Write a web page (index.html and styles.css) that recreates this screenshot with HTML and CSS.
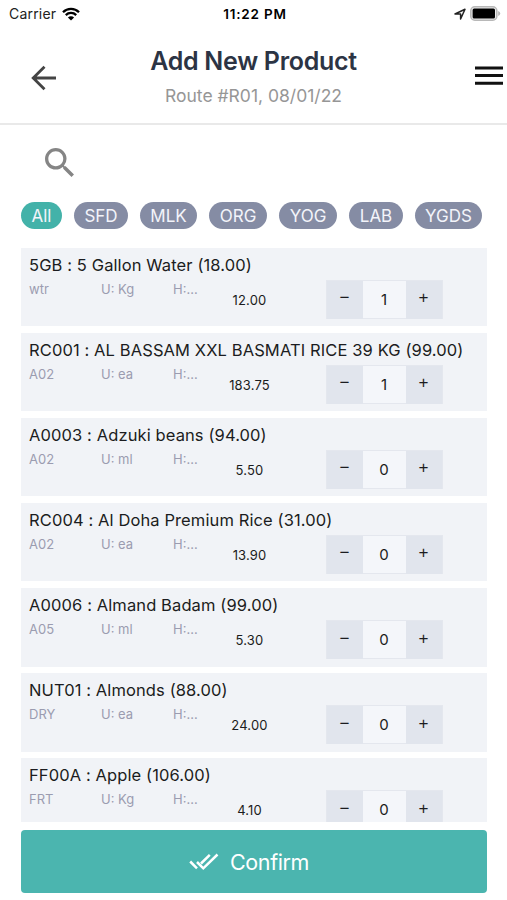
FILE: index.html
```html
<!DOCTYPE html>
<html lang="en">
<head>
    <meta charset="UTF-8">
    <meta name="viewport" content="width=device-width, initial-scale=1.0">
    <title>Add New Product</title>
    <link rel="stylesheet" href="styles.css">
</head>
<body>
    <div class="status-bar">
        <div class="status-left">
            <span>Carrier</span>
            <svg class="wifi" viewBox="0 0 18 14" width="18" height="14">
                <path d="M1 5.2a11.3 11.3 0 0 1 16 0M3.8 8.1a7.4 7.4 0 0 1 10.4 0" fill="none" stroke="#000" stroke-width="2.3"/>
                <path d="M9 13.6L5.9 10.5a4.4 4.4 0 0 1 6.2 0z"/>
            </svg>
        </div>
        <div class="status-time">11:22 PM</div>
        <div class="status-right">
            <svg viewBox="0 0 12 12" width="12" height="12">
                <path d="M1 6L11 1.2L6.6 11V6z" fill="none" stroke="#222" stroke-width="1.5" stroke-linejoin="round"/>
            </svg>
            <svg viewBox="0 0 31 15" width="31" height="15">
                <rect x="0.8" y="0.8" width="26" height="13.4" rx="4" fill="#eee" stroke="#b8b8b8" stroke-width="1.6"/>
                <rect x="2.6" y="2.6" width="22.4" height="9.8" rx="1.5"/>
                <path d="M28.2 5v5q2-.8 2-2.5t-2-2.5z" fill="#b4b4b4"/>
            </svg>
        </div>
    </div>

    <header class="header">
        <button class="icon-button">
            <svg viewBox="0 0 26 26" width="26" height="26">
                <path d="M25 13H2.5M13.5 1.7L2.2 13L13.5 24.3" fill="none" stroke="#444" stroke-width="2.8"/>
            </svg>
        </button>
        <div class="heading">
            <h1>Add New Product</h1>
            <p>Route #R01, 08/01/22</p>
        </div>
        <button class="icon-button menu">
            <svg viewBox="0 0 28 20" width="28" height="20">
                <path d="M0 2.1h28M0 9.6h28M0 17.3h28" stroke="#111" stroke-width="3"/>
            </svg>
        </button>
    </header>

    <div class="search">
        <svg viewBox="3 3 17.5 17.5" width="29" height="29">
            <path fill="#858585" d="M15.5 14h-.79l-.28-.27A6.47 6.47 0 0 0 16 9.5 6.5 6.5 0 1 0 9.5 16c1.61 0 3.09-.59 4.23-1.57l.27.28v.79l5 4.99L20.49 19l-4.99-5zm-6 0C7.01 14 5 11.99 5 9.5S7.01 5 9.5 5 14 7.01 14 9.5 11.99 14 9.5 14z"/>
        </svg>
    </div>

    <nav class="filters">
        <span class="chip w-all active">All</span>
        <span class="chip w-sfd">SFD</span>
        <span class="chip w-mlk">MLK</span>
        <span class="chip w-org">ORG</span>
        <span class="chip w-yog">YOG</span>
        <span class="chip w-lab">LAB</span>
        <span class="chip w-ygds">YGDS</span>
    </nav>

    <main class="list">
        <div class="card">
            <h2>5GB : 5 Gallon Water (18.00)</h2>
            <div class="details">
                <span class="meta">wtr</span><span class="meta">U: Kg</span><span class="meta">H:...</span>
                <span class="price">12.00</span>
                <div class="stepper"><button>−</button><span>1</span><button>+</button></div>
            </div>
        </div>
        <div class="card">
            <h2>RC001 : AL BASSAM XXL BASMATI RICE 39 KG (99.00)</h2>
            <div class="details">
                <span class="meta">A02</span><span class="meta">U: ea</span><span class="meta">H:...</span>
                <span class="price">183.75</span>
                <div class="stepper"><button>−</button><span>1</span><button>+</button></div>
            </div>
        </div>
        <div class="card">
            <h2>A0003 : Adzuki beans (94.00)</h2>
            <div class="details">
                <span class="meta">A02</span><span class="meta">U: ml</span><span class="meta">H:...</span>
                <span class="price">5.50</span>
                <div class="stepper"><button>−</button><span>0</span><button>+</button></div>
            </div>
        </div>
        <div class="card">
            <h2>RC004 : Al Doha Premium Rice (31.00)</h2>
            <div class="details">
                <span class="meta">A02</span><span class="meta">U: ea</span><span class="meta">H:...</span>
                <span class="price">13.90</span>
                <div class="stepper"><button>−</button><span>0</span><button>+</button></div>
            </div>
        </div>
        <div class="card">
            <h2>A0006 : Almand Badam (99.00)</h2>
            <div class="details">
                <span class="meta">A05</span><span class="meta">U: ml</span><span class="meta">H:...</span>
                <span class="price">5.30</span>
                <div class="stepper"><button>−</button><span>0</span><button>+</button></div>
            </div>
        </div>
        <div class="card">
            <h2>NUT01 : Almonds (88.00)</h2>
            <div class="details">
                <span class="meta">DRY</span><span class="meta">U: ea</span><span class="meta">H:...</span>
                <span class="price">24.00</span>
                <div class="stepper"><button>−</button><span>0</span><button>+</button></div>
            </div>
        </div>
        <div class="card">
            <h2>FF00A : Apple (106.00)</h2>
            <div class="details">
                <span class="meta">FRT</span><span class="meta">U: Kg</span><span class="meta">H:...</span>
                <span class="price">4.10</span>
                <div class="stepper"><button>−</button><span>0</span><button>+</button></div>
            </div>
        </div>
    </main>

    <button class="confirm">
        <svg viewBox="0 0 30 18" width="30" height="18">
            <path d="M1.2 8.5L8 15.3M8 9L14.3 15.3L28.5 1.5M12 10.5L20.8 1.8" fill="none" stroke="#fff" stroke-width="2.5"/>
        </svg>
        <span>Confirm</span>
    </button>
</body>
</html>
```

FILE: styles.css
```css
* {
    box-sizing: border-box;
}
body {
    margin: 0;
    width: 507px;
    height: 900px;
    overflow: hidden;
    display: flex;
    flex-direction: column;
    background-color: #fff;
    font-family: Inter, "Liberation Sans", sans-serif;
    color: #1b1c20;
}
button {
    border: 0;
    padding: 0;
    background: none;
    font-family: inherit;
    color: inherit;
}
svg {
    display: block;
}
h1, h2, p {
    margin: 0;
}

/* status bar */
.status-bar {
    height: 27px;
    padding: 0 6px 0 9px;
    display: grid;
    grid-template-columns: 1fr auto 1fr;
    align-items: center;
    font-size: 14px;
    letter-spacing: 0.2px;
    color: #222;
}
.status-left, .status-right {
    display: flex;
    align-items: center;
    gap: 6px;
}
.status-right {
    justify-content: flex-end;
    gap: 4px;
}
.status-time {
    font-weight: 600;
    font-size: 13.5px;
    letter-spacing: 0.8px;
    color: #000;
}

/* header */
.header {
    height: 98px;
    padding: 2px 4px 0 31px;
    display: grid;
    grid-template-columns: 26px 393px 28px;
    align-items: center;
    justify-content: space-between;
    border-bottom: 2px solid #e9e9e9;
}
.icon-button {
    padding-top: 3px;
}
.menu {
    padding-top: 0;
}
.heading {
    text-align: center;
    margin-right: 25px;
}
.heading h1 {
    font-size: 25px;
    line-height: 34px;
    font-weight: 600;
    letter-spacing: -0.3px;
    color: #2c3444;
}
.heading p {
    font-size: 17.5px;
    line-height: 24px;
    margin-top: 6px;
    color: #969696;
}

.search {
    height: 77px;
    padding: 23px 0 0 45px;
}

/* category chips */
.filters {
    height: 45px;
    padding-left: 21px;
    display: flex;
    gap: 12px;
}
.chip {
    height: 27px;
    line-height: 28px;
    border-radius: 14px;
    text-align: center;
    font-size: 17px;
    color: #f3f4fa;
    background-color: #858ca4;
}
.active {
    background-color: #43b2a9;
}
.w-all { width: 41px; }
.w-sfd { width: 54px; }
.w-mlk { width: 57px; }
.w-org { width: 58px; }
.w-yog { width: 58px; }
.w-lab { width: 54px; }
.w-ygds { width: 67px; }

/* product list */
.list {
    height: 575px;
    margin: 0 20px 0 21px;
    padding-top: 0.5px;
    overflow: hidden;
}
.card {
    height: 78.5px;
    margin-bottom: 6.65px;
    padding: 5px 0 0 8px;
    background-color: #f1f3f7;
}
.card h2 {
    font-size: 16.5px;
    line-height: 25px;
    font-weight: 400;
    letter-spacing: 0.11px;
    white-space: nowrap;
}
.details {
    display: flex;
    align-items: flex-start;
    padding-top: 2px;
}
.meta {
    width: 72px;
    font-size: 13px;
    line-height: 18px;
    color: #9b9cb0;
}
.price {
    width: 68px;
    margin: 10px 43px 0 -29.5px;
    text-align: center;
    font-size: 13px;
    letter-spacing: 0.15px;
    line-height: 20px;
}
.stepper {
    width: 117px;
    height: 39px;
    margin-left: -1px;
    display: grid;
    grid-template-columns: 36px 1fr 36px;
    background-color: #f4f6fa;
    border: 1px solid #e4e7ee;
    font-size: 15px;
    line-height: 38px;
    text-align: center;
}
.stepper button {
    background-color: #e1e5ed;
    font-family: "Liberation Sans", sans-serif;
    font-size: 17px;
    padding-bottom: 3px;
}

.confirm {
    width: 466px;
    height: 63px;
    margin: 8px 0 0 21px;
    padding-right: 10px;
    display: flex;
    align-items: center;
    justify-content: center;
    gap: 11px;
    border-radius: 4px;
    background-color: #4bb5af;
    color: #fff;
    font-size: 21.5px;
    letter-spacing: -0.4px;
}
```
